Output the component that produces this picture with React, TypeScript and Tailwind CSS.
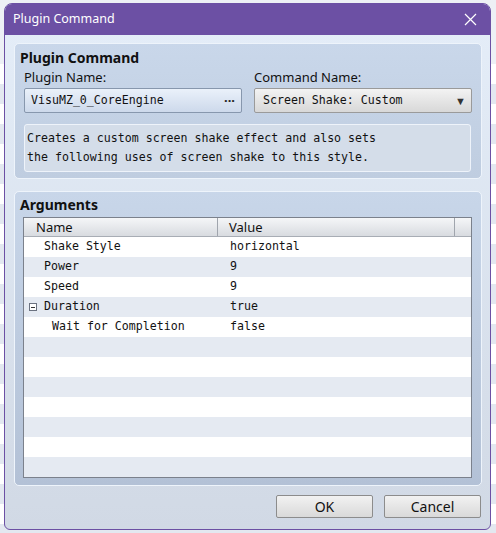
import React from "react";

const mono = "font-['DejaVu_Sans_Mono',monospace] text-[11.6px]";

const args = [
  { name: "Shake Style", value: "horizontal", indent: 0 },
  { name: "Power", value: "9", indent: 0 },
  { name: "Speed", value: "9", indent: 0 },
  { name: "Duration", value: "true", indent: 0, folder: true },
  { name: "Wait for Completion", value: "false", indent: 1 },
];

function CloseIcon() {
  return (
    <svg width="13" height="13" viewBox="0 0 13 13" className="block">
      <path d="M1 1 L12 12 M12 1 L1 12" stroke="#ffffff" strokeWidth="1.2" />
    </svg>
  );
}

function ArgRow({ index }: { index: number }) {
  const arg = args[index];
  const shade = index % 2 === 0 ? "bg-white" : "bg-[#e5eaf2]";
  return (
    <div className={`flex h-5 items-center ${shade} ${mono} text-[#111]`}>
      <div className="flex h-full w-[194px] items-center">
        {arg?.folder ? (
          <>
            <span className="ml-[5px] flex h-[8px] w-[8px] items-center justify-center border border-[#6b7280] bg-white">
              <span className="h-px w-[4px] bg-[#333]" />
            </span>
            <span className="pl-[7px]">{arg.name}</span>
          </>
        ) : (
          arg && <span className={arg.indent ? "pl-[28px]" : "pl-[20px]"}>{arg.name}</span>
        )}
      </div>
      <div className="pl-[12px]">{arg?.value}</div>
    </div>
  );
}

export default function App() {
  const rows = Array.from({ length: 12 }, (_, i) => i);
  return (
    <div className="relative h-[533px] w-[496px] overflow-hidden bg-[#edf0f5] font-['Noto_Sans',sans-serif]">
      {/* editor list peeking out behind the dialog */}
      <div className="flex flex-col pt-[64px]">
        {Array.from({ length: 24 }, (_, i) => (
          <div key={i} className={`h-5 ${i % 2 === 0 ? "bg-white" : "bg-[#e3e8f0]"}`} />
        ))}
      </div>

      <div className="absolute left-[4px] top-[3px] flex h-[527px] w-[487px] flex-col overflow-hidden rounded-t-[8px] rounded-b-[6px] border border-[#6c50a4] bg-gradient-to-b from-[#e5eef9] to-[#d1d9e5]">
        <div className="flex h-[31px] shrink-0 items-center justify-between bg-[#6c50a4] pl-[8px] pr-[13px]">
          <span className="text-[12.5px] text-white">Plugin Command</span>
          <CloseIcon />
        </div>

        <div className="flex flex-1 flex-col pl-[9px] pr-[8px] pt-[8px]">
          <section className="rounded-[5px] border border-[#eef4fb] bg-gradient-to-b from-[#c9d7ea] to-[#bfcde0] px-[9px] pb-[6px] pt-[4px]">
            <h2 className="-ml-[4px] text-[14px] font-bold leading-[20px] text-[#111]">Plugin Command</h2>
            <div className="grid grid-cols-2 gap-x-[12px]">
              <div className="flex flex-col">
                <label className="pt-[1px] text-[13px] leading-[17px] text-[#111]">Plugin Name:</label>
                <div className="mt-[2px] flex h-[25px] items-center justify-between rounded-[2px] border border-[#8797ad] bg-gradient-to-b from-[#eaf1fa] to-[#cdd9eb] pl-[6px] pr-[6px]">
                  <span className={`${mono} text-[#111]`}>VisuMZ_0_CoreEngine</span>
                  <span className="text-[13px] font-bold leading-none text-[#222]">···</span>
                </div>
              </div>
              <div className="flex flex-col">
                <label className="pt-[1px] text-[13px] leading-[17px] text-[#111]">Command Name:</label>
                <div className="mt-[2px] flex h-[25px] items-center justify-between rounded-[2px] border border-[#9a9a9a] bg-gradient-to-b from-[#f3f3f3] to-[#d8d8d8] pl-[8px] pr-[5px]">
                  <span className={`${mono} text-[#111]`}>Screen Shake: Custom</span>
                  <span className="text-[11px] leading-none text-[#333]">▼</span>
                </div>
              </div>
            </div>
            <div className="mr-[1px] mt-[11px] rounded-[3px] border border-[#eef3fa] bg-[#d4dde9] px-[2px] py-[4px]">
              <p className={`${mono} leading-[19px] text-[#111]`}>
                Creates a custom screen shake effect and also sets
                <br />
                the following uses of screen shake to this style.
              </p>
            </div>
          </section>

          <section className="mt-[12px] rounded-[5px] border border-[#eef4fb] bg-gradient-to-b from-[#c8d6e9] to-[#b3c1d6] pb-[7px] pl-[8px] pr-[9px] pt-[3px]">
            <h2 className="-ml-[3px] text-[14px] font-bold leading-[20px] text-[#111]">Arguments</h2>
            <div className="mt-[2px] border border-[#7b818c] bg-[#e5eaf2]">
              <div className="flex h-[19px] border-b border-[#a8adb5] bg-gradient-to-b from-[#f5f6f8] to-[#d8dbe0] text-[13px] leading-[19px] text-[#111]">
                <div className="w-[194px] border-r border-[#a0a5ad] pl-[12px]">Name</div>
                <div className="w-[237px] border-r border-[#a0a5ad] pl-[11px]">Value</div>
                <div className="flex-1" />
              </div>
              {rows.map((i) => (
                <ArgRow key={i} index={i} />
              ))}
            </div>
          </section>

          <div className="mt-[9px] flex justify-end gap-[11px] pr-[1px]">
            <button className="h-[23px] w-[97px] rounded-[2px] border border-[#8c8c8c] bg-gradient-to-b from-[#f2f2f2] to-[#d9d9d9] text-[14px] leading-none text-[#111]">
              OK
            </button>
            <button className="h-[23px] w-[97px] rounded-[2px] border border-[#8c8c8c] bg-gradient-to-b from-[#f2f2f2] to-[#d9d9d9] text-[14px] leading-none text-[#111]">
              Cancel
            </button>
          </div>
        </div>
      </div>
    </div>
  );
}
